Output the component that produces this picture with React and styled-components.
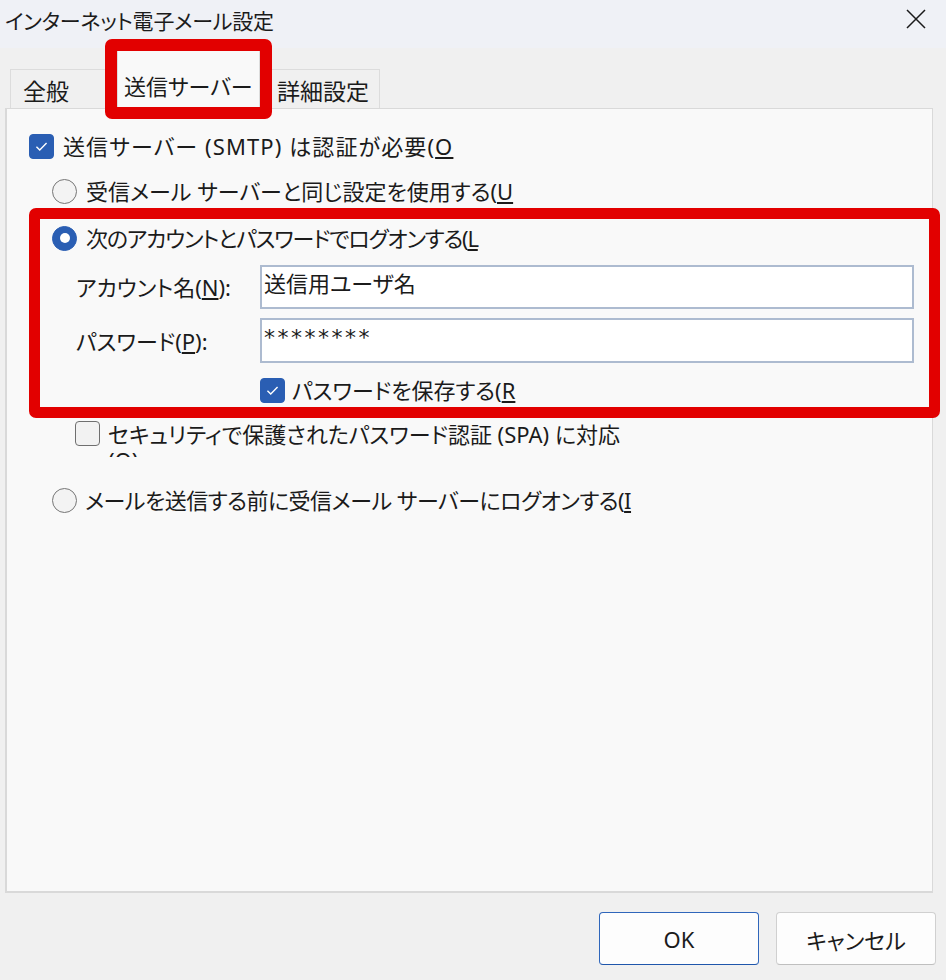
import React from 'react';
import styled, { createGlobalStyle } from 'styled-components';

const GlobalStyle = createGlobalStyle`
  html, body {
    margin: 0;
    padding: 0;
  }
  body {
    background: #f0f0f0;
    font-family: "Noto Sans", "Noto Sans CJK JP", sans-serif;
    color: #1b1b1b;
  }
`;

const Window = styled.div`
  width: 946px;
  height: 980px;
  display: flex;
  flex-direction: column;
  background: #f0f0f0;
  overflow: hidden;
  font-feature-settings: "palt";
`;

const TitleBar = styled.div`
  box-sizing: border-box;
  height: 48px;
  flex: none;
  display: flex;
  justify-content: space-between;
  align-items: center;
  padding: 0 20px 0 5px;
  background: #eff1f6;
`;

const Title = styled.div`
  font-size: 21px;
  line-height: 28px;
  margin-top: -6px;
  letter-spacing: -0.2px;
`;

const CloseIcon = styled.svg`
  width: 20px;
  height: 20px;
  margin-top: -10px;
`;

const TabStrip = styled.div`
  position: relative;
  height: 60px;
  flex: none;
  display: flex;
  align-items: flex-end;
  padding-left: 10px;
`;

const Tab = styled.div`
  box-sizing: border-box;
  width: ${(p) => p.$w}px;
  height: ${(p) => (p.$active ? 60 : 39)}px;
  margin-bottom: ${(p) => (p.$active ? -1 : 0)}px;
  padding-top: ${(p) => (p.$active ? 10 : 1)}px;
  padding-left: ${(p) => p.$pl}px;
  display: flex;
  align-items: center;
  font-size: ${(p) => (p.$active ? 22 : 23)}px;
  background: ${(p) => (p.$active ? '#f9f9f9' : '#f0f0f0')};
  border: 1px solid #dcdcdc;
  border-bottom: none;
  position: relative;
  z-index: ${(p) => (p.$active ? 1 : 0)};
`;

const Highlight = styled.div`
  position: absolute;
  box-sizing: border-box;
  left: ${(p) => p.$x}px;
  top: ${(p) => p.$y}px;
  width: ${(p) => p.$w}px;
  height: ${(p) => p.$h}px;
  border: ${(p) => p.$b}px solid #e20000;
  border-radius: 7px;
  pointer-events: none;
  z-index: 3;
`;

const Panel = styled.div`
  position: relative;
  box-sizing: border-box;
  margin-left: 5px;
  width: 928px;
  height: 785px;
  flex: none;
  display: flex;
  flex-direction: column;
  padding: 24px 0 0 22px;
  background: #f9f9f9;
  border: 1px solid #d9d9d9;
  border-width: 1px 1px 2px 2px;
`;

const Row = styled.div`
  display: flex;
  align-items: ${(p) => (p.$top ? 'flex-start' : 'center')};
  gap: ${(p) => p.$gap ?? 9}px;
  margin-top: ${(p) => p.$mt ?? 0}px;
  margin-left: ${(p) => p.$indent ?? 0}px;
  min-height: 26px;
`;

const Label = styled.span`
  font-size: 22px;
  line-height: 26px;
  white-space: nowrap;
  letter-spacing: ${(p) => p.$ls ?? 0}px;
`;

const ClippedLabel = styled.div`
  font-size: 22px;
  line-height: 26px;
  height: 36px;
  overflow: hidden;
`;

const Box = styled.span`
  box-sizing: border-box;
  flex: none;
  width: 25px;
  height: 25px;
  border-radius: 4px;
  display: flex;
  align-items: center;
  justify-content: center;
  background: ${(p) => (p.$checked ? '#2a5eb3' : '#f2f2f2')};
  border: 1px solid ${(p) => (p.$checked ? '#2a5eb3' : '#6f6f6f')};
`;

const Radio = styled.span`
  box-sizing: border-box;
  flex: none;
  width: 25px;
  height: 25px;
  border-radius: 50%;
  display: flex;
  align-items: center;
  justify-content: center;
  background: ${(p) => (p.$checked ? '#2a5eb3' : '#f3f3f3')};
  border: 1px solid ${(p) => (p.$checked ? '#2a5eb3' : '#767676')};

  &::after {
    content: '';
    display: ${(p) => (p.$checked ? 'block' : 'none')};
    width: 10px;
    height: 10px;
    border-radius: 50%;
    background: #ffffff;
  }
`;

const FieldLabel = styled.span`
  width: 184px;
  flex: none;
  font-size: 22px;
  line-height: 26px;
  white-space: nowrap;
`;

const Field = styled.div`
  box-sizing: border-box;
  width: 654px;
  height: ${(p) => p.$h}px;
  padding: 3px 2px 0;
  background: #ffffff;
  border: 2px solid #adbbd0;
  font-size: 22px;
  line-height: 26px;
`;

const Stars = styled.span`
  font-family: "DejaVu Sans", sans-serif;
  font-size: 22px;
  letter-spacing: 2.5px;
`;

const Footer = styled.div`
  display: flex;
  justify-content: flex-end;
  gap: 17px;
  padding: 19px 10px 0 0;
`;

const Button = styled.div`
  box-sizing: border-box;
  width: 160px;
  height: 53px;
  display: flex;
  align-items: center;
  justify-content: center;
  font-size: 22px;
  background: #fdfdfd;
  border: 1px solid ${(p) => (p.$primary ? '#2f66bb' : '#d0d0d0')};
  border-bottom-color: ${(p) => (p.$primary ? '#1f56ab' : '#bfbfbf')};
  border-radius: 4px;
`;

const Check = () => (
  <svg width="25" height="25" viewBox="0 0 25 25">
    <path d="M7 12.8 L10.6 16.4 L18 8.8" fill="none" stroke="#ffffff" strokeWidth="1.5" />
  </svg>
);

const Checkbox = ({ checked }) => (
  <Box $checked={checked}>{checked && <Check />}</Box>
);

const App = () => {
  return (
    <>
      <GlobalStyle />
      <Window>
        <TitleBar>
          <Title>インターネット電子メール設定</Title>
          <CloseIcon viewBox="0 0 20 20">
            <path d="M1 1 L19 19 M19 1 L1 19" stroke="#1a1a1a" strokeWidth="1.5" fill="none" />
          </CloseIcon>
        </TitleBar>

        <TabStrip>
          <Tab $w={107} $pl={12}>全般</Tab>
          <Tab $w={143} $pl={6} $active>送信サーバー</Tab>
          <Tab $w={120} $pl={16}>詳細設定</Tab>
          <Highlight $x={105} $y={-9} $w={167} $h={80} $b={12} />
        </TabStrip>

        <Panel>
          <Row>
            <Checkbox checked />
            <Label $ls={1.1}>
              送信サーバー (SMTP) は認証が必要(<u>O</u>
            </Label>
          </Row>
          <Row $indent={23} $mt={19}>
            <Radio />
            <Label>
              受信メール サーバーと同じ設定を使用する(<u>U</u>
            </Label>
          </Row>
          <Row $indent={23} $mt={21}>
            <Radio $checked />
            <Label $ls={-1.2}>
              次のアカウントとパスワードでログオンする(<u>L</u>
            </Label>
          </Row>
          <Row $indent={47} $mt={14} $gap={0}>
            <FieldLabel>
              アカウント名(<u>N</u>):
            </FieldLabel>
            <Field $h={44}>送信用ユーザ名</Field>
          </Row>
          <Row $indent={47} $mt={9} $gap={0}>
            <FieldLabel>
              パスワード(<u>P</u>):
            </FieldLabel>
            <Field $h={45}>
              <Stars>********</Stars>
            </Field>
          </Row>
          <Row $indent={231} $mt={14} $gap={7}>
            <Checkbox checked />
            <Label>
              パスワードを保存する(<u>R</u>
            </Label>
          </Row>
          <Row $indent={46} $mt={18} $gap={8} $top>
            <Checkbox />
            <ClippedLabel>
              セキュリティで保護されたパスワード認証 (SPA) に対応
              <br />(<u>Q</u>)
            </ClippedLabel>
          </Row>
          <Row $indent={23} $mt={30} $gap={8}>
            <Radio />
            <Label $ls={-0.5}>
              メールを送信する前に受信メール サーバーにログオンする(<u>I</u>
            </Label>
          </Row>
          <Highlight $x={22} $y={99} $w={911} $h={210} $b={11} />
        </Panel>

        <Footer>
          <Button $primary>OK</Button>
          <Button>キャンセル</Button>
        </Footer>
      </Window>
    </>
  );
};

export default App;
